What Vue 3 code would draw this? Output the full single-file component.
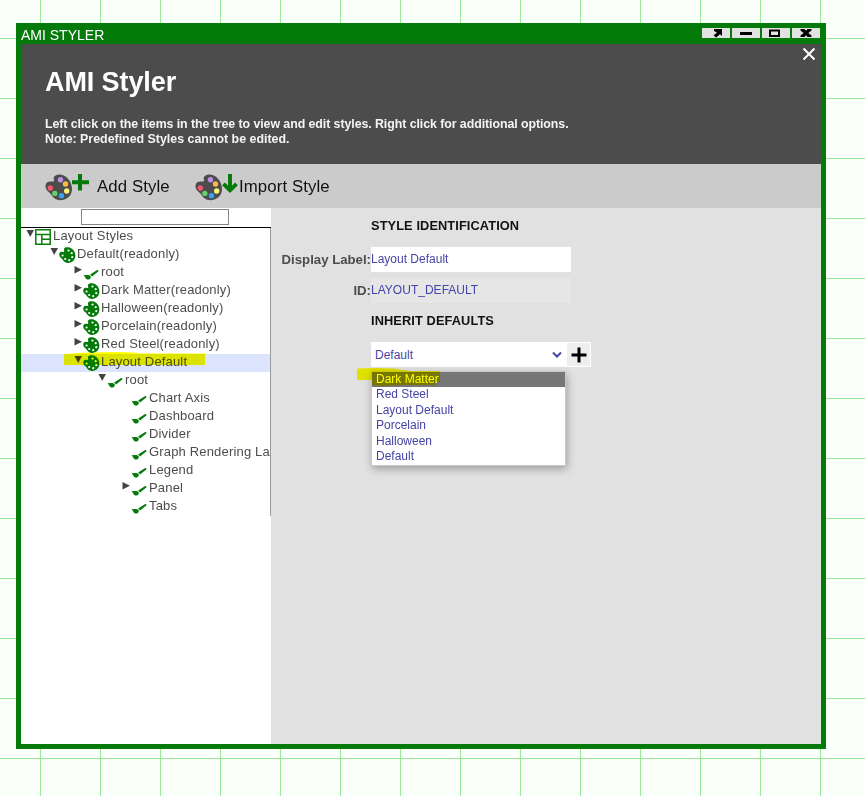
<script setup>
const rows = [
  { text: 'Layout Styles', level: 0, icon: 'layout', arrow: 'down' },
  { text: 'Default(readonly)', level: 1, icon: 'palette', arrow: 'down' },
  { text: 'root', level: 2, icon: 'brush', arrow: 'right' },
  { text: 'Dark Matter(readonly)', level: 2, icon: 'palette', arrow: 'right' },
  { text: 'Halloween(readonly)', level: 2, icon: 'palette', arrow: 'right' },
  { text: 'Porcelain(readonly)', level: 2, icon: 'palette', arrow: 'right' },
  { text: 'Red Steel(readonly)', level: 2, icon: 'palette', arrow: 'right' },
  { text: 'Layout Default', level: 2, icon: 'palette', arrow: 'down', selected: true },
  { text: 'root', level: 3, icon: 'brush', arrow: 'down' },
  { text: 'Chart Axis', level: 4, icon: 'brush' },
  { text: 'Dashboard', level: 4, icon: 'brush' },
  { text: 'Divider', level: 4, icon: 'brush' },
  { text: 'Graph Rendering La', level: 4, icon: 'brush' },
  { text: 'Legend', level: 4, icon: 'brush' },
  { text: 'Panel', level: 4, icon: 'brush', arrow: 'right' },
  { text: 'Tabs', level: 4, icon: 'brush' },
]
const options = ['Dark Matter', 'Red Steel', 'Layout Default', 'Porcelain', 'Halloween', 'Default']
const tools = [
  { text: 'Add Style', kind: 'add' },
  { text: 'Import Style', kind: 'import' },
]
</script>

<template>
  <div class="desktop">
    <section class="window">
      <div class="titlebar">
        <span class="caption">AMI STYLER</span>
        <div class="controls">
          <button><svg width="28" height="10"><path d="M12 1h8v7l-2-1.800L14.200 9.500 11.500 7.600 15 4.500 12 3z" /></svg></button>
          <button><svg width="28" height="10"><path d="M8 4h12v3H8z" /></svg></button>
          <button><svg width="28" height="10"><path d="M8 2.500h9v5.500H8z" fill="none" stroke="#000" stroke-width="2" /></svg></button>
          <button><svg width="28" height="10"><path d="M8.500 1h4L14 2.700 15.500 1h4v1.400L16.300 5l3.200 2.500V9h-4L14 7.300 12.500 9h-4V7.500L11.700 5 8.500 2.400z" /></svg></button>
        </div>
      </div>

      <header class="header">
        <h1>AMI Styler</h1>
        <p class="hint">Left click on the items in the tree to view and edit styles. Right click for additional options.</p>
        <p>Note: Predefined Styles cannot be edited.</p>
        <svg class="close" width="14" height="14"><path d="M1.500 1.500l11 11M12.500 1.500l-11 11" fill="none" stroke="#fff" stroke-width="2" /></svg>
      </header>

      <nav class="toolbar">
        <div v-for="t in tools" :key="t.kind" class="tool" :class="t.kind">
          <svg width="45" height="31" viewBox="0 0 45 31">
            <path d="M9 6C10 4.200 12.500 3.200 15 3.500C22 4.300 27 11 27 18C27 24.500 22 29.200 15.500 29.200C11 29.200 8 26.500 6.300 23.800C5.300 22 3.800 21.200 2.500 20C.8 18.300 0 15.500.8 13.200C1.800 10.600 4.500 10.200 6.500 10.500C8.500 10.800 9.500 10.300 9 8.800C8.600 7.700 8.500 7 9 6Z" fill="#4c4c4c" />
            <circle cx="15.500" cy="8.700" r="2.700" fill="#bd90e6" />
            <circle cx="20.500" cy="13" r="2.700" fill="#fdb944" />
            <circle cx="21.700" cy="20" r="2.700" fill="#fdf17e" />
            <circle cx="16.500" cy="24.700" r="2.700" fill="#3ba0ee" />
            <circle cx="9.800" cy="22.400" r="2.700" fill="#63cf6c" />
            <circle cx="5.300" cy="17" r="2.700" fill="#f05a6c" />
            <path v-if="t.kind === 'add'" d="M35 3v16.500M27 11.300h17" fill="none" stroke="#047a0a" stroke-width="4" />
            <path v-else d="M35 3v17M28.500 12.800l6.500 6.500 6.500-6.500" fill="none" stroke="#047a0a" stroke-width="3.900" />
          </svg>
          <span>{{ t.text }}</span>
        </div>
      </nav>

      <div class="content">
        <aside class="side">
          <div class="search"><input aria-label="Search" /></div>
          <div class="tree">
            <div v-for="(r, i) in rows" :key="i" class="row" :class="[{ selected: r.selected }, 'l' + r.level]">
              <svg class="arrow" width="9" height="18">
                <path v-if="r.arrow === 'down'" d="M.5 2h7.500L4.200 9z" />
                <path v-if="r.arrow === 'right'" d="M.5 2v7.500L8 5.800z" />
              </svg>
              <svg class="icon" width="18" height="18" viewBox="0 0 18 18">
                <g v-if="r.icon === 'layout'" fill="none" stroke="#087f08" stroke-width="1.500">
                  <path d="M.8 1.800h14.400v14.400H.8zM.8 6.500h14.400M6.800 6.500v9.700M6.800 11.300h8.400" />
                </g>
                <g v-else-if="r.icon === 'palette'">
                  <path d="M5.200 2.600C5.800 1.400 7.500 1 9.300 1.200C13.400 1.700 16.400 5.200 16.400 9.600C16.400 13.900 13.300 17 9.200 17C6.500 17 4.800 15.600 3.700 13.800C3.200 12.900 2.200 12.500 1.400 11.600C.3 10.500-.1 8.800.5 7.300C1.100 5.900 2.700 5.600 4 5.900C5.200 6.100 5.500 5.600 5.200 4.800C4.900 4.100 4.800 3.400 5.200 2.600Z" fill="#047a0a" />
                  <g fill="#fff">
                    <circle cx="9.500" cy="4.500" r="1.100" /><circle cx="12.700" cy="7.200" r="1.100" />
                    <circle cx="13.300" cy="11.200" r="1.100" /><circle cx="10.200" cy="14.200" r="1.100" />
                    <circle cx="6.200" cy="13" r="1.100" /><circle cx="3.600" cy="9.500" r="1.100" />
                  </g>
                </g>
                <g v-else fill="#047a0a">
                  <path d="M.4 10.800C2 11.600 3.300 11 4.800 11C6.700 11 8 11.800 7.800 13.200C7.500 15.200 5.700 15.800 4.100 15.400C2.400 15 2 12.500.4 10.800Z" />
                  <path d="M7.200 10.600L13.800 6.200Q15.700 5.400 15.300 7.400L9 12.600Z" />
                </g>
              </svg>
              <span class="label">{{ r.text }}</span>
            </div>
            <svg class="marker tree-marker" width="142" height="14"><path d="M0 2L9 1.500Q28 0 50 0T75 1.500H141V13H0z" fill="#ff0" /></svg>
          </div>
        </aside>

        <main class="form">
          <h2>STYLE IDENTIFICATION</h2>
          <div class="field name"><label>Display Label:</label><div class="value">Layout Default</div></div>
          <div class="field ident"><label>ID:</label><div class="value">LAYOUT_DEFAULT</div></div>
          <h2 class="inherit">INHERIT DEFAULTS</h2>
          <div class="picker">
            <div class="select">
              <span>Default</span>
              <svg width="10" height="8"><path d="M1 1.500l4 4 4-4" fill="none" stroke="#4545a6" stroke-width="2" /></svg>
            </div>
            <button class="plus"><svg width="16" height="16"><path d="M8 .5v15M.5 8h15" stroke="#000" stroke-width="3" /></svg></button>
            <div class="menu">
              <div v-for="(o, i) in options" :key="o" class="option" :class="{ active: i === 0 }">{{ o }}</div>
            </div>
            <svg class="marker menu-marker" width="84" height="19"><path d="M0 .5Q18-.5 37 .5L53 3H83V14H78V17H36Q27 19 15 17V12H0z" fill="#ff0" /></svg>
          </div>
        </main>
      </div>
    </section>
  </div>
</template>

<style>
body { margin: 0; }
</style>

<style scoped>
* { box-sizing: border-box; }
svg { display: block; flex: none; }
h1, h2, p { margin: 0; }
button { border: 0; padding: 0; }
.desktop {
  height: 796px;
  padding: 23px 0 0 16px;
  overflow: hidden;
  font-family: "Liberation Sans", Arial, sans-serif;
  background-color: #fbfffa;
  background-image: linear-gradient(#98e898 1px, transparent 1px), linear-gradient(90deg, #98e898 1px, transparent 1px);
  background-size: 60px 60px;
  background-position: 0 38px, 40px 0;
}
.window {
  width: 810px;
  height: 726px;
  padding: 0 5px 5px;
  background: #047a0a;
  display: flex;
  flex-direction: column;
}
.titlebar { height: 21px; display: flex; justify-content: space-between; color: #fff; }
.caption { font-size: 14px; line-height: 24px; white-space: nowrap; }
.controls { display: flex; gap: 2px; padding: 5px 1px 0 0; }
.controls button { width: 28px; height: 10px; background: #e2e2e2; }
.header { position: relative; height: 120px; padding: 22px 24px 0; background: #4c4c4c; color: #fff; }
h1 { font-size: 27px; line-height: 33px; margin-bottom: 18px; letter-spacing: -.1px; }
.header p { font-size: 12.4px; line-height: 15px; font-weight: 700; white-space: nowrap; color: #f4f4f4; }
.header .hint { letter-spacing: -.076px; }
.close { position: absolute; right: 5px; top: 3px; }
.toolbar { height: 44px; padding: 7px 0 0 24px; display: flex; background: #cbcbcb; color: #111; }
.tool { display: flex; font-size: 16.800px; line-height: 31px; letter-spacing: .1px; white-space: nowrap; }
.add { width: 150px; gap: 7px; }
.import span { margin-left: -1px; }
.content { flex: 1; display: flex; }
.side { width: 250px; background: #fff; }
.search { height: 20px; padding: 1px 0 0 60px; border-bottom: 1px solid #000; }
.search input { display: block; width: 148px; height: 16px; padding: 0; border: 1px solid #858585; border-radius: 0; background: #fff; }
.tree { position: relative; border-right: 1px solid #999; }
.row { height: 18px; padding-left: 5px; display: flex; }
.l1 { padding-left: 29px; }
.l2 { padding-left: 53px; }
.l3 { padding-left: 77px; }
.l4 { padding-left: 101px; }
.selected { background: #dce3fd; }
.arrow { fill: #444; }
.label { font-size: 13px; line-height: 16px; letter-spacing: .17px; color: #4d4d4d; white-space: nowrap; }
.marker { position: absolute; mix-blend-mode: multiply; }
.tree-marker { left: 43px; top: 124px; }
.form { flex: 1; background: #e1e1e1; padding: 9px 0 0; }
h2 { font-size: 12.800px; line-height: 17px; margin-left: 100px; letter-spacing: .1px; color: #111; }
.field { display: flex; height: 25px; line-height: 25px; }
.name { margin-top: 13px; }
.ident { margin-top: 6px; }
.field label { width: 100px; text-align: right; font-size: 13.200px; font-weight: 700; color: #4d4d4d; white-space: nowrap; }
.value { width: 200px; font-size: 12px; color: #4545a6; background: #fff; }
.ident .value { background: #e6e6e6; letter-spacing: .02px; }
.inherit { margin-top: 9px; }
.picker { position: relative; display: flex; margin: 13px 0 0 100px; }
.select { width: 196px; height: 25px; padding: 0 5px 0 4px; display: flex; align-items: center; justify-content: space-between; background: #fff; color: #4545a6; font-size: 12px; }
.plus { width: 24px; height: 25px; border: 1px solid #fff; border-left: 0; background: #eee; display: flex; align-items: center; justify-content: center; }
.menu { position: absolute; left: 0; top: 29px; width: 195px; height: 95px; border: 1px solid #c9c9c9; background: #fff; box-shadow: 1px 3px 8px rgba(0, 0, 0, .3); }
.option { height: 15.400px; padding-left: 4px; font-size: 12px; line-height: 15.400px; color: #4545a6; }
.active { background: #767676; color: #fff; }
.menu-marker { left: -14px; top: 26px; }
</style>
